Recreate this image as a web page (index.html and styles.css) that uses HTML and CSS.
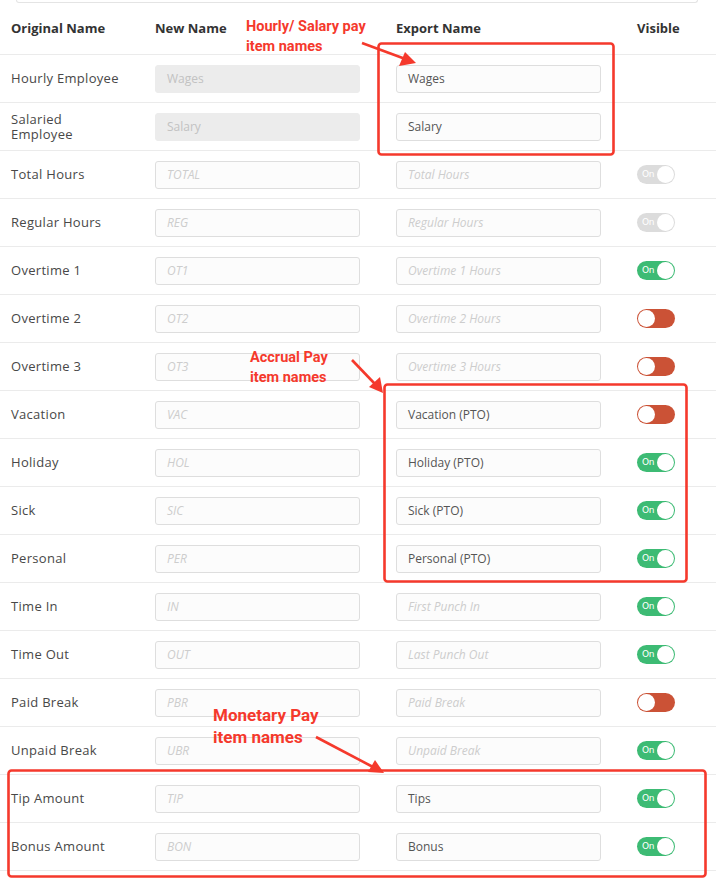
FILE: index.html
```html
<!DOCTYPE html>
<html>
<head>
<meta charset="utf-8">
<link rel="stylesheet" href="styles.css">
</head>
<body>
<div class="page">
  <div class="topbox"></div>
  <div class="grid">
    <div class="row head">
      <div class="c1">Original Name</div>
      <div class="c2">New Name</div>
      <div class="c3">Export Name</div>
      <div class="c4">Visible</div>
    </div>

    <div class="row">
      <div class="c1 label">Hourly Employee</div>
      <div class="c2"><div class="inp dis">Wages</div></div>
      <div class="c3"><div class="inp val">Wages</div></div>
      <div class="c4"></div>
    </div>
    <div class="row">
      <div class="c1 label">Salaried Employee</div>
      <div class="c2"><div class="inp dis">Salary</div></div>
      <div class="c3"><div class="inp val">Salary</div></div>
      <div class="c4"></div>
    </div>
    <div class="row">
      <div class="c1 label">Total Hours</div>
      <div class="c2"><div class="inp ph">TOTAL</div></div>
      <div class="c3"><div class="inp ph">Total Hours</div></div>
      <div class="c4"><span class="tg gray"><i>On</i><b></b></span></div>
    </div>
    <div class="row">
      <div class="c1 label">Regular Hours</div>
      <div class="c2"><div class="inp ph">REG</div></div>
      <div class="c3"><div class="inp ph">Regular Hours</div></div>
      <div class="c4"><span class="tg gray"><i>On</i><b></b></span></div>
    </div>
    <div class="row">
      <div class="c1 label">Overtime 1</div>
      <div class="c2"><div class="inp ph">OT1</div></div>
      <div class="c3"><div class="inp ph">Overtime 1 Hours</div></div>
      <div class="c4"><span class="tg on"><i>On</i><b></b></span></div>
    </div>
    <div class="row">
      <div class="c1 label">Overtime 2</div>
      <div class="c2"><div class="inp ph">OT2</div></div>
      <div class="c3"><div class="inp ph">Overtime 2 Hours</div></div>
      <div class="c4"><span class="tg off"><b></b></span></div>
    </div>
    <div class="row">
      <div class="c1 label">Overtime 3</div>
      <div class="c2"><div class="inp ph">OT3</div></div>
      <div class="c3"><div class="inp ph">Overtime 3 Hours</div></div>
      <div class="c4"><span class="tg off"><b></b></span></div>
    </div>
    <div class="row">
      <div class="c1 label">Vacation</div>
      <div class="c2"><div class="inp ph">VAC</div></div>
      <div class="c3"><div class="inp val">Vacation (PTO)</div></div>
      <div class="c4"><span class="tg off"><b></b></span></div>
    </div>
    <div class="row">
      <div class="c1 label">Holiday</div>
      <div class="c2"><div class="inp ph">HOL</div></div>
      <div class="c3"><div class="inp val">Holiday (PTO)</div></div>
      <div class="c4"><span class="tg on"><i>On</i><b></b></span></div>
    </div>
    <div class="row">
      <div class="c1 label">Sick</div>
      <div class="c2"><div class="inp ph">SIC</div></div>
      <div class="c3"><div class="inp val">Sick (PTO)</div></div>
      <div class="c4"><span class="tg on"><i>On</i><b></b></span></div>
    </div>
    <div class="row">
      <div class="c1 label">Personal</div>
      <div class="c2"><div class="inp ph">PER</div></div>
      <div class="c3"><div class="inp val">Personal (PTO)</div></div>
      <div class="c4"><span class="tg on"><i>On</i><b></b></span></div>
    </div>
    <div class="row">
      <div class="c1 label">Time In</div>
      <div class="c2"><div class="inp ph">IN</div></div>
      <div class="c3"><div class="inp ph">First Punch In</div></div>
      <div class="c4"><span class="tg on"><i>On</i><b></b></span></div>
    </div>
    <div class="row">
      <div class="c1 label">Time Out</div>
      <div class="c2"><div class="inp ph">OUT</div></div>
      <div class="c3"><div class="inp ph">Last Punch Out</div></div>
      <div class="c4"><span class="tg on"><i>On</i><b></b></span></div>
    </div>
    <div class="row">
      <div class="c1 label">Paid Break</div>
      <div class="c2"><div class="inp ph">PBR</div></div>
      <div class="c3"><div class="inp ph">Paid Break</div></div>
      <div class="c4"><span class="tg off"><b></b></span></div>
    </div>
    <div class="row">
      <div class="c1 label">Unpaid Break</div>
      <div class="c2"><div class="inp ph">UBR</div></div>
      <div class="c3"><div class="inp ph">Unpaid Break</div></div>
      <div class="c4"><span class="tg on"><i>On</i><b></b></span></div>
    </div>
    <div class="row">
      <div class="c1 label">Tip Amount</div>
      <div class="c2"><div class="inp ph">TIP</div></div>
      <div class="c3"><div class="inp val">Tips</div></div>
      <div class="c4"><span class="tg on"><i>On</i><b></b></span></div>
    </div>
    <div class="row">
      <div class="c1 label">Bonus Amount</div>
      <div class="c2"><div class="inp ph">BON</div></div>
      <div class="c3"><div class="inp val">Bonus</div></div>
      <div class="c4"><span class="tg on"><i>On</i><b></b></span></div>
    </div>
  </div>

  <svg class="marks" width="716" height="880" viewBox="0 0 716 880">
    <g fill="none" stroke="#f5392c" stroke-width="2.6">
      <rect x="378.5" y="43.5" width="235" height="111" rx="3"/>
      <rect x="384.5" y="384.5" width="302" height="197" rx="3"/>
      <rect x="8.5" y="770.5" width="697" height="106" rx="3"/>
      <line x1="362" y1="43" x2="404" y2="58.5"/>
      <line x1="352" y1="360" x2="375" y2="384"/>
      <line x1="316" y1="737" x2="373" y2="767"/>
    </g>
    <g fill="#f5392c">
      <polygon points="416,63 399,66 405,52"/>
      <polygon points="383,393 369,387 380,377"/>
      <polygon points="384,773 368,772 375,760"/>
    </g>
  </svg>
  <div class="note n1">Hourly/ Salary pay<br>item names</div>
  <div class="note n2">Accrual Pay<br>item names</div>
  <div class="note n3">Monetary Pay<br>item names</div>
</div>
</body>
</html>
```

FILE: styles.css
```css
html, body {
  margin: 0;
  padding: 0;
  background: #ffffff;
}
.page {
  position: relative;
  width: 716px;
  height: 880px;
  overflow: hidden;
  font-family: "Open Sans", "Liberation Sans", sans-serif;
}
.topbox {
  height: 2px;
  margin: 0 18px 0 16px;
  border: 1px solid #e4e4e4;
  border-top: none;
  border-radius: 0 0 6px 6px;
}
.grid {
  display: flex;
  flex-direction: column;
}
.row {
  display: grid;
  grid-template-columns: 144px 241px 241px 1fr;
  align-items: center;
  height: 47px;
  border-bottom: 1px solid #ebebeb;
  padding-left: 11px;
}
.row.head {
  height: 51px;
  font-weight: 700;
  font-size: 13px;
  color: #333;
  letter-spacing: 0;
}
.row.head > div {
  margin-top: -2px;
}
.label {
  font-size: 13px;
  color: #484848;
  letter-spacing: 0.3px;
  line-height: 15px;
  max-width: 112px;
}
.inp {
  width: 205px;
  height: 28px;
  box-sizing: border-box;
  border: 1px solid #dedede;
  border-radius: 3px;
  background: #fcfcfc;
  font-size: 12px;
  line-height: 26px;
  padding-left: 11px;
  white-space: nowrap;
  overflow: hidden;
}
.inp.dis {
  background: #ececec;
  border-color: #ececec;
  color: #c2c2c2;
}
.inp.val {
  color: #555;
}
.inp.ph {
  color: #cdcdcd;
  font-style: italic;
}
.tg {
  position: relative;
  display: block;
  width: 38px;
  height: 19px;
  border-radius: 10px;
}
.tg.on { background: #3dbb74; }
.tg.off { background: #cb5236; }
.tg.gray { background: #dcdcdc; }
.tg i {
  position: absolute;
  left: 5px;
  top: 4px;
  font-style: normal;
  font-size: 9px;
  line-height: 10px;
  color: #fff;
  font-family: "DejaVu Sans", sans-serif;
  letter-spacing: -0.3px;
}
.tg b {
  position: absolute;
  top: 1px;
  right: 1px;
  width: 17px;
  height: 17px;
  border-radius: 50%;
  background: #fff;
}
.tg.off b {
  right: auto;
  left: 1px;
}
.marks {
  position: absolute;
  left: 0;
  top: 0;
  pointer-events: none;
}
.note {
  position: absolute;
  color: #f5392c;
  font-family: Roboto, "Liberation Sans", sans-serif;
  font-weight: 700;
  font-size: 14.5px;
  line-height: 20px;
}
.n1 { left: 246px; top: 17px; }
.n2 { left: 250px; top: 348px; }
.n3 { left: 213px; top: 704px; font-size: 17px; line-height: 22px; }
```
